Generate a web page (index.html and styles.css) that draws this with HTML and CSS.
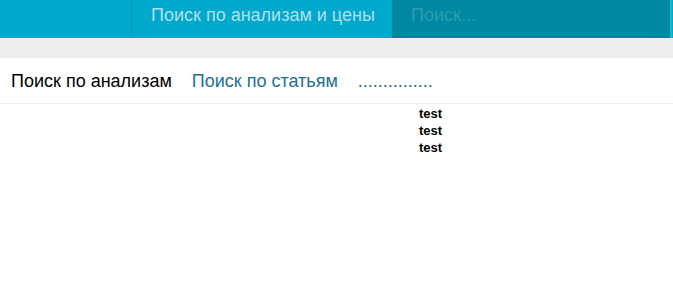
FILE: index.html
```html
<!DOCTYPE html>
<html lang="ru">
<head>
    <meta charset="UTF-8">
    <title>Поиск по анализам</title>
    <link rel="stylesheet" href="styles.css">
</head>
<body>
    <div class="header">
        <div class="header-left"></div>
        <a class="header-title" href="#">Поиск по анализам и цены</a>
        <div class="header-search">
            <input type="text" placeholder="Поиск...">
        </div>
    </div>
    <div class="band"></div>
    <div class="tabs">
        <a class="tab active" href="#">Поиск по анализам</a>
        <a class="tab" href="#">Поиск по статьям</a>
        <a class="tab" href="#">...............</a>
    </div>
    <div class="results">
        <div class="item">test</div>
        <div class="item">test</div>
        <div class="item">test</div>
    </div>
</body>
</html>
```

FILE: styles.css
```css
body {
    margin: 0;
    font-family: 'Liberation Sans', Arial, sans-serif;
    background: #fff;
}
.header {
    display: flex;
    height: 38px;
    background: #00a9cb;
}
.header-left {
    width: 131px;
    border-right: 1px solid #0795b3;
}
.header-title {
    width: 260px;
    padding-left: 19px;
    box-sizing: border-box;
    line-height: 30px;
    font-size: 18px;
    color: #b0dfed;
    text-decoration: none;
}
.header-search {
    width: 280px;
    background: #0088a2;
    border-left: 1px solid #0a7f95;
    border-right: 2px solid #16b3d3;
    box-sizing: border-box;
}
.header-search input {
    width: 100%;
    height: 30px;
    box-sizing: border-box;
    padding: 0 0 0 18px;
    border: none;
    background: transparent;
    font-family: 'Liberation Sans', Arial, sans-serif;
    font-size: 18px;
    color: #fff;
    outline: none;
}
.header-search input::placeholder {
    color: #2b9db3;
}
.band {
    height: 20px;
    background: #eeeeee;
}
.tabs {
    display: flex;
    gap: 20px;
    padding: 13px 11px 0;
    height: 32px;
    border-bottom: 1px solid #eeeeee;
}
.tab {
    font-size: 18px;
    color: #1e6f93;
    text-decoration: none;
}
.tab.active {
    color: #000;
}
.results {
    padding: 1px 0 0 419px;
}
.item {
    font-size: 13px;
    font-weight: bold;
    line-height: 17px;
    color: #000;
}
```
